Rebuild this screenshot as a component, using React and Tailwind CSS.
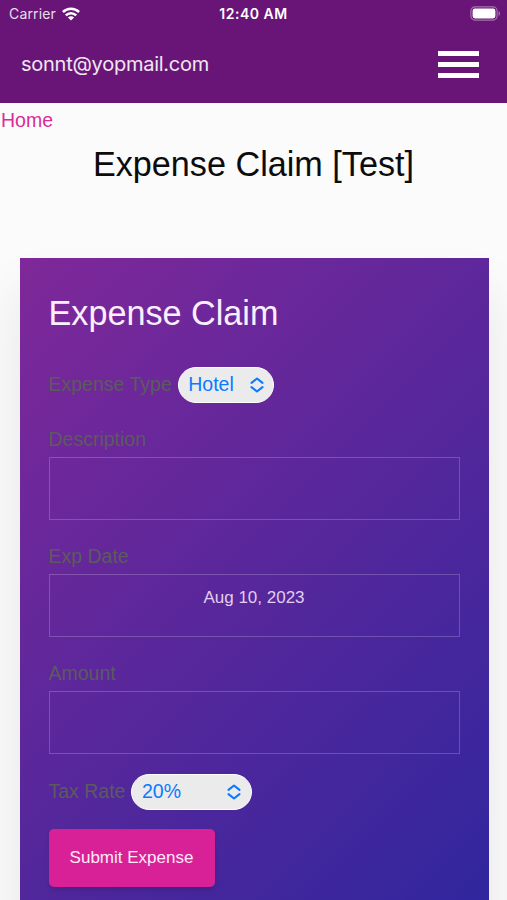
import React, { useState } from 'react';

const NAV_BARS = ['top', 'middle', 'bottom'];

function IconWifi() {
  return (
    <svg width="18" height="14" viewBox="0 0 18 14" fill="none" stroke="#fff" strokeWidth="2.5">
      <path d="M0.9 5C5.5 0.6 12.5 0.6 17.1 5" />
      <path d="M3.8 8.3C6.8 5.4 11.2 5.4 14.2 8.3" />
      <path d="M9 13.6L5.9 10.5C7.7 8.9 10.3 8.9 12.1 10.5Z" fill="#fff" stroke="none" />
    </svg>
  );
}

function IconBattery() {
  return (
    <svg width="31" height="15" viewBox="0 0 31 15" fill="none">
      <rect x="0.9" y="0.9" width="26.2" height="13.2" rx="4" stroke="#fff" strokeOpacity="0.4" strokeWidth="1.2" />
      <rect x="2.6" y="2.6" width="22.8" height="9.8" rx="2.4" fill="#fff" />
      <path d="M28.6 5.2C30.4 5.9 30.4 9.1 28.6 9.8Z" fill="#fff" fillOpacity="0.45" />
    </svg>
  );
}

function IconUpDown() {
  return (
    <svg width="14" height="16" viewBox="0 0 14 16" fill="none" stroke="#0a7aff" strokeWidth="2.1" strokeLinecap="round" strokeLinejoin="round">
      <path d="M1.5 5.8L7 1.5L12.5 5.8" />
      <path d="M1.5 10.2L7 14.5L12.5 10.2" />
    </svg>
  );
}

function StatusBar() {
  return (
    <div className="grid grid-cols-3 items-center h-[27px] pl-[9px] pr-[6px] text-[14px] text-white font-['Inter',sans-serif]">
      <div className="flex items-center gap-[6px]">
        <span className="opacity-85 tracking-[0.15px]">Carrier</span>
        <IconWifi />
      </div>
      <span className="-ml-[3px] text-center font-semibold tracking-[0.5px]">12:40 AM</span>
      <div className="flex justify-end">
        <IconBattery />
      </div>
    </div>
  );
}

function SelectRow({ label, value, pillClass }) {
  return (
    <div className="flex items-center gap-[6px] h-[36px]">
      <span className="text-[19.5px] leading-none text-[#5b5b5f]">{label}</span>
      <button className={`flex items-center justify-between h-[36px] pl-[9.5px] rounded-full border border-white bg-[#ebebeb] ${pillClass}`}>
        <span className="text-[19.5px] leading-none text-[#0a7aff]">{value}</span>
        <IconUpDown />
      </button>
    </div>
  );
}

function Field({ label, value = '', onChange }) {
  return (
    <label className="flex flex-col h-[99px]">
      <span className="h-[35px] pt-[7px] text-[19.5px] leading-[20px] text-[#5b5b5f]">{label}</span>
      <input
        type="text"
        value={value}
        onChange={(e) => onChange(e.target.value)}
        className="w-full h-[63px] pb-[16px] border-[1.5px] border-white/20 bg-transparent text-center text-[17px] text-[#e3cdf1] outline-none"
      />
    </label>
  );
}

export default function App() {
  const [description, setDescription] = useState('');
  const [date, setDate] = useState('Aug 10, 2023');
  const [amount, setAmount] = useState('');

  return (
    <div className="h-[900px] overflow-hidden bg-[#fbfbfb] font-['Liberation_Sans',Arial,sans-serif]">
      <header className="h-[103px] bg-[#681577]">
        <StatusBar />
        <div className="flex items-center justify-between h-[75px] pl-[21px] pr-[28px]">
          <span className="-mt-[2px] text-[20px] tracking-[-0.25px] text-white/90 font-['Inter',sans-serif]">sonnt@yopmail.com</span>
          <button className="flex flex-col gap-[6px]">
            {NAV_BARS.map((bar) => (
              <span key={bar} className="block w-[41px] h-[5px] bg-white" />
            ))}
          </button>
        </div>
      </header>

      <a className="block h-[35px] pt-[7px] pl-px text-[19.5px] leading-[20px] text-[#db2b98]" href="#home">Home</a>
      <h1 className="h-[120px] pt-[6px] text-center text-[34.2px] leading-[40px] text-[#0c0c0c]">Expense Claim [Test]</h1>

      <main className="ml-[19.5px] mr-[18.5px] h-[690px] px-[29px] pt-[35px] bg-linear-[135deg,#7f2899,#2d269e] shadow-[0_32px_48px_rgba(0,0,0,0.09)]">
        <h2 className="h-[74px] text-[34.2px] leading-[40px] text-[#fbeeff]">Expense Claim</h2>
        <SelectRow label="Expense Type" value="Hotel" pillClass="w-[96px] pr-[9px]" />
        <div className="flex flex-col gap-[18px] mt-[19px]">
          <Field label="Description" value={description} onChange={setDescription} />
          <Field label="Exp Date" value={date} onChange={setDate} />
          <Field label="Amount" value={amount} onChange={setAmount} />
        </div>
        <div className="mt-[19px]">
          <SelectRow label="Tax Rate" value="20%" pillClass="w-[121px] pr-[10px]" />
        </div>
        <button className="mt-[19px] w-[166px] h-[58px] rounded-[5px] bg-[#d92197] text-[17px] text-[#ffeaf8] shadow-md">
          Submit Expense
        </button>
      </main>
    </div>
  );
}
